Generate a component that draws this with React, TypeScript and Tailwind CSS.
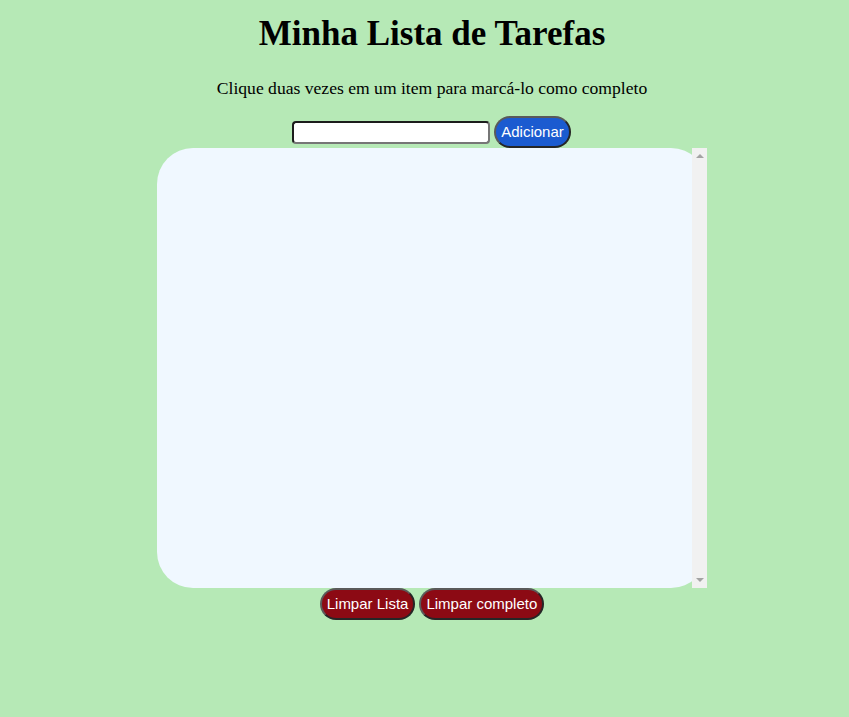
import React, { useState } from "react";

const btn =
  "h-[32px] px-[5px] rounded-full border-2 border-t-[#5a5a5a] border-l-[#5a5a5a] border-b-[#262626] border-r-[#262626] text-white text-[15px] font-['Liberation_Sans',sans-serif]";

const App = () => {
  const [items, setItems] = useState<{ text: string; done: boolean }[]>([]);
  const [text, setText] = useState("");

  const add = () => {
    if (!text.trim()) return;
    setItems([...items, { text, done: false }]);
    setText("");
  };

  return (
    <div className="min-h-[717px] bg-[#b6e9b6] pl-[15px] flex flex-col items-center text-black">
      <h1 className="mt-[14px] text-[35px] leading-[40px] font-bold font-['Liberation_Serif',serif]">
        Minha Lista de Tarefas
      </h1>
      <p className="mt-[24px] text-[17.6px] leading-[20px] font-['Liberation_Serif',serif]">
        Clique duas vezes em um item para marcá-lo como completo
      </p>
      <div className="mt-[18px] flex items-center gap-1 pr-[1px]">
        <input
          className="w-[198px] h-[23px] rounded-[4px] border-2 border-t-[#1c1c1c] border-l-[#1c1c1c] border-b-[#767676] border-r-[#767676] bg-white px-1 text-[13px] outline-none"
          value={text}
          onChange={(e) => setText(e.target.value)}
        />
        <button onClick={add} className={btn + " h-[31px] bg-[#1b5bd0]"}>
          Adicionar
        </button>
      </div>
      <div className="relative w-[550px] h-[440px]">
        <ol className="w-full h-full bg-[#f0f8ff] rounded-[36px] overflow-y-auto text-left font-['Liberation_Serif',serif] [scrollbar-width:none]">
          {items.map((it, i) => (
            <li
              key={i}
              onDoubleClick={() =>
                setItems(items.map((x, j) => (j === i ? { ...x, done: !x.done } : x)))
              }
              className={it.done ? "line-through px-6 py-1" : "px-6 py-1"}
            >
              {it.text}
            </li>
          ))}
        </ol>
        {/* fake classic scrollbar */}
        <div className="absolute right-0 top-0 h-full w-[15px] bg-[#f1f1f1] flex flex-col justify-between items-center py-[6px]">
          <div className="w-0 h-0 border-x-4 border-x-transparent border-b-4 border-b-[#a3a3a3]" />
          <div className="w-0 h-0 border-x-4 border-x-transparent border-t-4 border-t-[#a3a3a3]" />
        </div>
      </div>
      <div className="flex gap-1">
        <button onClick={() => setItems([])} className={btn + " bg-[#8c0a14]"}>
          Limpar Lista
        </button>
        <button
          onClick={() => setItems(items.filter((x) => !x.done))}
          className={btn + " bg-[#8c0a14]"}
        >
          Limpar completo
        </button>
      </div>
    </div>
  );
};

export default App;
